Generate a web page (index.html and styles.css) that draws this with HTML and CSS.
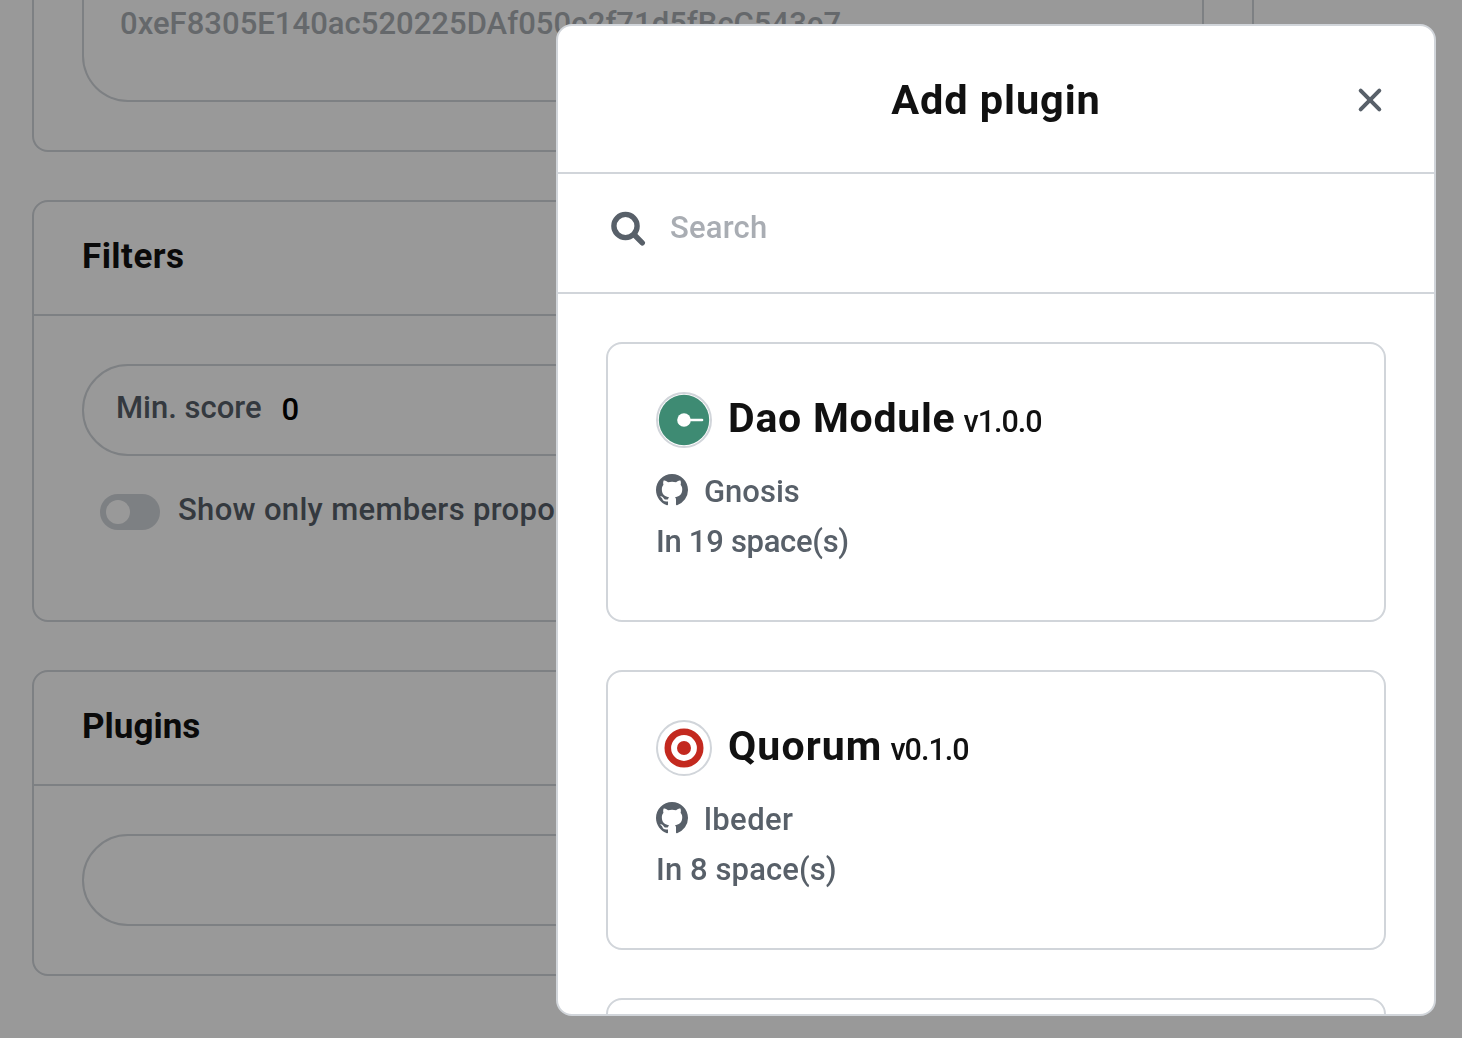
FILE: index.html
```html
<!DOCTYPE html>
<html lang="en">
<head>
<meta charset="utf-8">
<title>Add plugin</title>
<link rel="stylesheet" href="styles.css">
</head>
<body>
<main class="page">
  <section class="panel panel-strategies">
    <div class="textarea">0xeF8305E140ac520225DAf050e2f71d5fBcC543e7</div>
  </section>
  <section class="panel panel-filters">
    <h4 class="panel-title title-filters">Filters</h4>
    <div class="panel-body">
      <div class="field"><span class="label">Min. score</span><span class="value">0</span></div>
      <div class="toggle-row"><span class="toggle"><span class="knob"></span></span><span class="toggle-label">Show only members proposals</span></div>
    </div>
  </section>
  <section class="panel panel-plugins">
    <h4 class="panel-title">Plugins</h4>
    <div class="panel-body"><div class="field"></div></div>
  </section>
</main>
<div class="backdrop"></div>
<div class="modal" role="dialog" aria-label="Add plugin">
  <header class="modal-header">
    <h3 class="modal-title">Add plugin</h3>
    <svg class="close" viewBox="0 0 28 28"><path d="M4.7 4.7l18.6 18.6M23.3 4.7L4.7 23.3"/></svg>
  </header>
  <div class="search">
    <svg class="search-icon" viewBox="0 0 36 36"><circle cx="15.5" cy="16" r="11.6"/><path d="M24.5 25L32.3 32.8"/></svg>
    <span class="placeholder">Search</span>
  </div>
  <div class="list">
    <article class="card">
      <div class="card-head">
        <svg class="avatar" viewBox="0 0 56 56"><circle class="ring" cx="28" cy="28" r="27"/><circle cx="28" cy="28" r="25.2" fill="#3e8b73"/><circle cx="28" cy="28" r="6.8" fill="#fff"/><path d="M33 28H46" stroke="#fff" stroke-width="2.6" stroke-linecap="round"/></svg>
        <h2 class="name">Dao Module</h2><span class="version">v1.0.0</span>
      </div>
      <div class="author"><svg class="github" viewBox="0 0 16 16"><path d="M8 0C3.58 0 0 3.58 0 8c0 3.54 2.29 6.53 5.47 7.59.4.07.55-.17.55-.38 0-.19-.01-.82-.01-1.49-2.01.37-2.53-.49-2.69-.94-.09-.23-.48-.94-.82-1.13-.28-.15-.68-.52-.01-.53.63-.01 1.08.58 1.23.82.72 1.21 1.87.87 2.33.66.07-.52.28-.87.51-1.07-1.78-.2-3.64-.89-3.64-3.95 0-.87.31-1.59.82-2.15-.08-.2-.36-1.02.08-2.12 0 0 .67-.21 2.2.82.64-.18 1.32-.27 2-.27s1.36.09 2 .27c1.53-1.04 2.2-.82 2.2-.82.44 1.1.16 1.92.08 2.12.51.56.82 1.27.82 2.15 0 3.07-1.87 3.75-3.65 3.95.29.25.54.73.54 1.48 0 1.07-.01 1.93-.01 2.2 0 .21.15.46.55.38A8.01 8.01 0 0 0 16 8c0-4.42-3.58-8-8-8z"/></svg><span>Gnosis</span></div>
      <div class="spaces spaces-wide">In 19 space(s)</div>
    </article>
    <article class="card">
      <div class="card-head">
        <svg class="avatar" viewBox="0 0 56 56"><circle class="ring" cx="28" cy="28" r="27"/><circle cx="28" cy="28" r="16.2" fill="none" stroke="#c3291f" stroke-width="6.6"/><circle cx="28" cy="28" r="7" fill="#c3291f"/></svg>
        <h2 class="name name-quorum">Quorum</h2><span class="version">v0.1.0</span>
      </div>
      <div class="author author-lbeder"><svg class="github" viewBox="0 0 16 16"><path d="M8 0C3.58 0 0 3.58 0 8c0 3.54 2.29 6.53 5.47 7.59.4.07.55-.17.55-.38 0-.19-.01-.82-.01-1.49-2.01.37-2.53-.49-2.69-.94-.09-.23-.48-.94-.82-1.13-.28-.15-.68-.52-.01-.53.63-.01 1.08.58 1.23.82.72 1.21 1.87.87 2.33.66.07-.52.28-.87.51-1.07-1.78-.2-3.64-.89-3.64-3.95 0-.87.31-1.59.82-2.15-.08-.2-.36-1.02.08-2.12 0 0 .67-.21 2.2.82.64-.18 1.32-.27 2-.27s1.36.09 2 .27c1.53-1.04 2.2-.82 2.2-.82.44 1.1.16 1.92.08 2.12.51.56.82 1.27.82 2.15 0 3.07-1.87 3.75-3.65 3.95.29.25.54.73.54 1.48 0 1.07-.01 1.93-.01 2.2 0 .21.15.46.55.38A8.01 8.01 0 0 0 16 8c0-4.42-3.58-8-8-8z"/></svg><span>lbeder</span></div>
      <div class="spaces">In 8 space(s)</div>
    </article>
    <article class="card"></article>
  </div>
</div>
</body>
</html>
```
FILE: styles.css
```css
* { box-sizing: border-box; }
body { margin: 0; width: 1462px; height: 1038px; overflow: hidden; background: #fff; color: #111; font: 500 31px/50px Roboto, "Liberation Sans", sans-serif; }
h2, h3, h4 { margin: 0; }
svg { display: block; flex: none; }

.page { display: flex; flex-direction: column; gap: 48px; width: 1222px; margin-left: 32px; }
.panel { border: 2px solid #d1d5da; border-radius: 16px; }
.panel-strategies { height: 152px; padding: 0 48px 48px; border-top: 0; border-radius: 0 0 16px 16px; }
.textarea { height: 102px; padding: 0 36px; border: 2px solid #d1d5da; border-top: 0; border-radius: 0 0 46px 46px; color: #a9aeb2; line-height: 47px; letter-spacing: .03px; }
.panel-filters { height: 422px; }
.panel-plugins { height: 306px; }
.panel-title { height: 114px; padding: 0 48px; border-bottom: 2px solid #d1d5da; font-size: 35px; font-weight: 700; line-height: 110px; }
.title-filters { letter-spacing: .45px; }
.panel-body { padding: 48px; }
.field { display: flex; height: 92px; padding: 0 32px; border: 2px solid #d1d5da; border-radius: 46px; line-height: 83px; }
.label { color: #586069; }
.value { margin: 2px 0 0 20px; color: #000; }
.toggle-row { display: flex; align-items: center; gap: 18px; margin: 31px 0 0 18px; color: #586069; white-space: nowrap; }
.toggle-label { padding-bottom: 3px; margin-bottom: 1px; letter-spacing: .32px; line-height: 46px; }
.toggle { width: 60px; height: 36px; padding: 6px; border-radius: 18px; background: #d1d5da; }
.knob { display: block; width: 24px; height: 24px; border-radius: 50%; background: #fff; }

.backdrop { position: fixed; inset: 0; background: rgba(0, 0, 0, .4); }
.modal { position: fixed; top: 24px; left: 556px; width: 880px; height: 992px; overflow: hidden; border: 2px solid #d1d5da; border-radius: 16px; background: #fff; }
.modal-header { display: grid; grid-template-columns: 28px 1fr 28px; align-items: center; height: 148px; padding: 2px 50px 0; border-bottom: 2px solid #d1d5da; }
.modal-title { grid-column: 2; font-size: 41.5px; font-weight: 700; letter-spacing: .9px; text-align: center; }
.close { width: 28px; height: 28px; fill: none; stroke: #586069; stroke-width: 4; stroke-linecap: round; }
.search { display: flex; align-items: center; gap: 24px; height: 120px; padding: 0 52px 10px; border-bottom: 2px solid #d1d5da; color: #a9adb3; }
.search-icon { width: 36px; height: 36px; fill: none; stroke: #586069; stroke-width: 5.4; stroke-linecap: round; }
.placeholder { letter-spacing: .2px; }
.list { display: flex; flex-direction: column; gap: 48px; padding: 48px; }
.card { flex: none; height: 280px; padding: 48px; border: 2px solid #d1d5da; border-radius: 16px; color: #586069; }
.card-head { display: flex; align-items: baseline; height: 74px; color: #111; }
.avatar { align-self: flex-start; width: 56px; height: 56px; margin-right: 16px; }
.ring { fill: #fff; stroke: #d1d5da; stroke-width: 2; }
.name { font-size: 41px; font-weight: 700; line-height: 52px; letter-spacing: .75px; }
.name-quorum { letter-spacing: 1.1px; }
.version { margin-left: 8px; font-size: 30.5px; letter-spacing: -1px; }
.author { display: flex; align-items: center; gap: 16px; padding-top: 1px; }
.author-lbeder { letter-spacing: .4px; }
.github { width: 32px; height: 32px; margin-bottom: 4px; fill: #586069; }
.spaces { letter-spacing: .1px; }
.spaces-wide { letter-spacing: -.3px; }
```
